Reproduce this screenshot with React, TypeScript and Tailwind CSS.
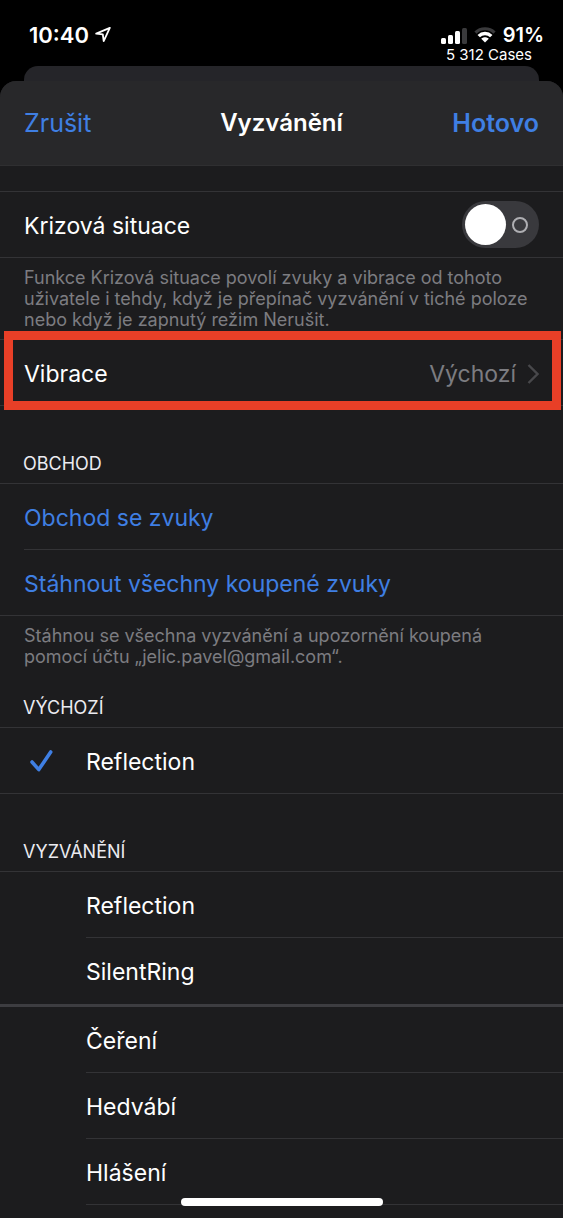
import { useState } from "react";
import type { ReactNode } from "react";

type Ringtone = {
  id: string;
  name: string;
};

const DEFAULT_TONE: Ringtone = { id: "default", name: "Reflection" };

const PURCHASED: Ringtone[] = [
  { id: "reflection", name: "Reflection" },
  { id: "silentring", name: "SilentRing" },
];

const BUILT_IN: Ringtone[] = [
  { id: "cereni", name: "Čeření" },
  { id: "hedvabi", name: "Hedvábí" },
  { id: "hlaseni", name: "Hlášení" },
];

function StatusBar() {
  return (
    <div className="flex h-[66px] items-start justify-between pl-[29px] pr-[19px] pt-[22px] text-white">
      <div className="flex items-center gap-1.5">
        <span className="text-[22px] font-semibold leading-[26px]">10:40</span>
        <svg className="h-4 w-4" viewBox="0 0 16 16" fill="none" stroke="currentColor" strokeWidth="1.8" strokeLinejoin="round">
          <path d="M14.8.9 1.200 6.600l6.600.7.9 6.900Z" />
        </svg>
      </div>
      <div className="flex flex-col items-end">
        <div className="flex h-[26px] items-center gap-[7px]">
          <svg className="h-[17px] w-[26px]" viewBox="0 0 26 17" fill="currentColor">
            <rect x="0" y="11" width="5" height="6" rx="1.500" />
            <rect x="7" y="8" width="5" height="9" rx="1.500" />
            <rect x="14" y="4" width="5" height="13" rx="1.500" />
            <rect x="21" y="1" width="5" height="16" rx="1.500" fill="#3a3a3c" />
          </svg>
          <svg className="h-4 w-[22px]" viewBox="0 0 23 16">
            <path d="M11.500 0C7.200 0 3.300 1.600.4 4.300l2.300 2.300a12.800 12.800 0 0 1 17.600 0l2.300-2.300A16.300 16.300 0 0 0 11.500 0Z" fill="#3a3a3c" />
            <path d="M11.500 4.700A11 11 0 0 0 3.700 7.900l2.500 2.500a7.800 7.800 0 0 1 10.600 0l2.500-2.500a11 11 0 0 0-7.800-3.200Z" fill="#fff" />
            <path d="M11.500 10.300c-1.500 0-2.900.6-3.900 1.500l3.900 4 3.900-4c-1-.9-2.400-1.500-3.900-1.500Z" fill="#fff" />
          </svg>
          <span className="text-xl font-semibold leading-[26px]">91%</span>
        </div>
        <span className="pr-3 text-[15px] leading-[14px]">5 312 Cases</span>
      </div>
    </div>
  );
}

function SectionTitle({ children, compact = false }: { children: ReactNode; compact?: boolean }) {
  return (
    <h2 className={`px-[23px] pb-[9px] text-[18px] leading-[21px] text-[#ebebf0] ${compact ? "pt-[21px]" : "pt-[47px]"}`}>
      {children}
    </h2>
  );
}

function Footnote({ children }: { children: ReactNode }) {
  return <p className="px-6 py-[9px] text-[18px] leading-[21px] text-[#7c7c81]">{children}</p>;
}

function ToneRow({
  tone,
  selected,
  onSelect,
  divider = "inset",
}: {
  tone: Ringtone;
  selected: boolean;
  onSelect: (id: string) => void;
  divider?: "inset" | "full" | "thick";
}) {
  return (
    <label
      className={`flex cursor-pointer ${divider === "full" ? "border-b border-[#333336]" : ""} ${divider === "thick" ? "border-b-3 border-[#3d3d41]" : ""}`}
    >
      <input
        type="radio"
        name="ringtone"
        value={tone.id}
        checked={selected}
        onChange={() => onSelect(tone.id)}
        className="sr-only"
      />
      <span className="flex w-[86px] items-center pl-[30px]">
        {selected && (
          <svg className="h-[22px] w-[23px]" viewBox="0 0 23 22" fill="none" stroke="#3f7fe3" strokeWidth="3.600" strokeLinecap="round" strokeLinejoin="round">
            <path d="M2 12 8.800 19.600 20.700 2" />
          </svg>
        )}
      </span>
      <span
        className={`flex flex-1 items-center pt-0.5 text-[23px] leading-7 text-white ${divider === "full" ? "h-[65px]" : "h-[66px]"} ${divider === "inset" ? "border-b border-[#333336]" : ""}`}
      >
        {tone.name}
      </span>
    </label>
  );
}

export default function App() {
  const [emergency, setEmergency] = useState(false);
  const [tone, setTone] = useState(DEFAULT_TONE.id);

  return (
    <div className="min-h-screen bg-black font-[Inter,'Liberation_Sans',sans-serif] text-white">
      <StatusBar />
      {/* edge of the screen behind the sheet */}
      <div className="mx-6 h-[15px] rounded-t-[14px] bg-[#252529]" />

      <main className="overflow-hidden rounded-t-[16px] bg-[#1c1c1e] pb-[13px]">
        <header className="grid h-[85px] grid-cols-3 items-center border-b border-[#2f2f31] bg-[#28282a] px-6 text-[25px] leading-8">
          <button type="button" className="justify-self-start text-[#3f7fe3]">Zrušit</button>
          <h1 className="justify-self-center text-2xl font-semibold">Vyzvánění</h1>
          <button type="button" className="justify-self-end font-semibold text-[#3f7fe3]">Hotovo</button>
        </header>

        <label className="mt-[25px] flex h-[67px] cursor-pointer items-center justify-between border-y border-[#333336] px-6 text-[23px] leading-7">
          <span className="pt-0.5">Krizová situace</span>
          <input
            type="checkbox"
            role="switch"
            checked={emergency}
            onChange={e => setEmergency(e.target.checked)}
            className="peer sr-only"
          />
          <span className="flex h-[47px] w-[77px] items-center justify-between rounded-full bg-[#39393d] pl-[3px] pr-[11px] peer-checked:flex-row-reverse peer-checked:bg-green-500">
            <span className="h-[41px] w-[41px] rounded-full bg-white" />
            <span className="h-4 w-4 rounded-full border-2 border-[#aeaeb2]" />
          </span>
        </label>
        <Footnote>
          Funkce Krizová situace povolí zvuky a vibrace od tohoto
          uživatele i tehdy, když je přepínač vyzvánění v tiché poloze
          nebo když je zapnutý režim Nerušit.
        </Footnote>

        <div className="relative">
          <button type="button" className="flex h-[67px] w-full items-center border-y border-[#333336] px-6 pt-0.5 text-[23px] leading-7">
            <span>Vibrace</span>
            <span className="ml-auto text-[#7c7c81]">Výchozí</span>
            <svg className="ml-[11px] h-5 w-3" viewBox="0 0 12 20" fill="none" stroke="#48484b" strokeWidth="2.400">
              <path d="M1.500 1 10.500 10 1.500 19" />
            </svg>
          </button>
          <div className="pointer-events-none absolute -bottom-1 -top-2 left-1 right-0.5 border-9 border-[#e83f27]" />
        </div>

        <SectionTitle>OBCHOD</SectionTitle>
        <div className="border-y border-[#333336] text-[23px] leading-7 text-[#3f7fe3]">
          <a href="#obchod" className="ml-6 flex h-[66px] items-center border-b border-[#333336] pt-0.5">Obchod se zvuky</a>
          <a href="#stahnout" className="ml-6 flex h-[65px] items-center pt-0.5">Stáhnout všechny koupené zvuky</a>
        </div>
        <Footnote>
          Stáhnou se všechna vyzvánění a upozornění koupená
          <br />
          pomocí účtu „jelic.pavel@gmail.com“.
        </Footnote>

        <SectionTitle compact>VÝCHOZÍ</SectionTitle>
        <div className="border-t border-[#333336]">
          <ToneRow tone={DEFAULT_TONE} selected={tone === DEFAULT_TONE.id} onSelect={setTone} divider="full" />
        </div>

        <SectionTitle>VYZVÁNĚNÍ</SectionTitle>
        <div className="border-t border-[#333336]">
          {PURCHASED.map((t, i) => (
            <ToneRow
              key={t.id}
              tone={t}
              selected={tone === t.id}
              onSelect={setTone}
              divider={i === PURCHASED.length - 1 ? "thick" : "inset"}
            />
          ))}
          {BUILT_IN.map(t => (
            <ToneRow key={t.id} tone={t} selected={tone === t.id} onSelect={setTone} />
          ))}
        </div>
      </main>

      {/* home indicator */}
      <div className="fixed bottom-3 left-1/2 h-2 w-[202px] -translate-x-1/2 rounded-full bg-white" />
    </div>
  );
}
